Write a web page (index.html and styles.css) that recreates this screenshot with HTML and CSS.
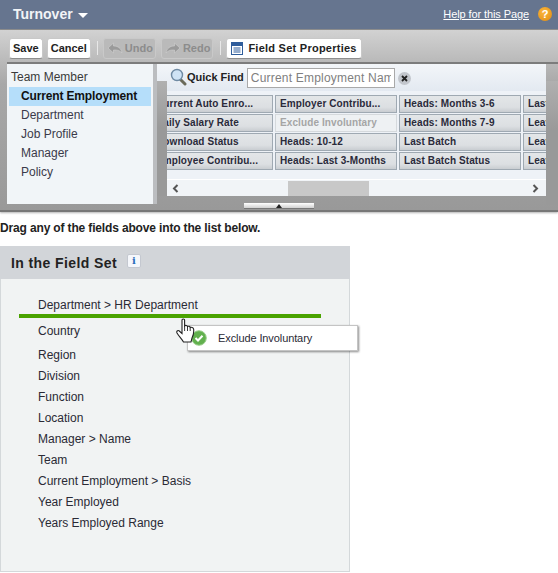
FILE: index.html
```html
<!DOCTYPE html>
<html lang="en">
<head>
  <meta charset="UTF-8">
  <title>Turnover</title>
  <link rel="stylesheet" href="styles.css">
</head>
<body>
  <div class="title-bar">
    <div class="report-name">Turnover <span class="caret"></span></div>
    <div class="help">
      <a href="#">Help for this Page</a>
      <span class="help-icon">?</span>
    </div>
  </div>

  <div class="builder">
    <div class="toolbar">
      <button class="btn text-only">Save</button>
      <button class="btn text-only">Cancel</button>
      <span class="sep"></span>
      <button class="btn disabled">
        <svg width="16" height="13" viewBox="0 0 16 13"><path d="M1 6 L6.500 1 V4 C11 4 14 6 15 11 C12 8 10 8 6.500 8 V11 Z" fill="#9a9a9a" stroke="#d0d0d0" stroke-width=".6"/></svg>
        Undo
      </button>
      <button class="btn disabled">
        <svg width="16" height="13" viewBox="0 0 16 13"><path d="M15 6 L9.500 1 V4 C5 4 2 6 1 11 C4 8 6 8 9.500 8 V11 Z" fill="#9a9a9a" stroke="#d0d0d0" stroke-width=".6"/></svg>
        Redo
      </button>
      <span class="sep"></span>
      <button class="btn props">
        <svg width="12" height="13" viewBox="0 0 12 13"><rect x=".5" y=".5" width="11" height="12" fill="#fff" stroke="#2f5d9b"/><rect x="1" y="1" width="10" height="3" fill="#2f5d9b"/><path d="M2.500 6h7M2.500 8h7M2.500 10h7" stroke="#2f5d9b"/></svg>
        Field Set Properties
      </button>
    </div>

    <div class="panes">
      <div class="categories">
        <div class="cat-root">Team Member</div>
        <div class="cat selected">Current Employment</div>
        <div class="cat">Department</div>
        <div class="cat">Job Profile</div>
        <div class="cat">Manager</div>
        <div class="cat">Policy</div>
      </div>

      <div class="fields">
        <div class="quick-find">
          <svg class="lens" width="17" height="18" viewBox="0 0 17 18"><path d="M10 11 L15 16" stroke="#6b6b5a" stroke-width="3" stroke-linecap="round"/><circle cx="7" cy="7" r="5.500" fill="#cfe3f5" stroke="#6f8aa3" stroke-width="1.400"/></svg>
          <label>Quick Find</label>
          <div class="find-input"><span>Current Employment Name</span></div>
          <span class="clear">
            <svg width="7" height="7" viewBox="0 0 7 7"><path d="M1 1 L6 6 M6 1 L1 6" stroke="#222" stroke-width="1.800"/></svg>
          </span>
        </div>

        <div class="field-scroll">
          <div class="field-grid">
            <div class="field">Current Auto Enro...</div>
            <div class="field">Employer Contribu...</div>
            <div class="field">Heads: Months 3-6</div>
            <div class="field">Last Hire</div>
            <div class="field">Daily Salary Rate</div>
            <div class="field used">Exclude Involuntary</div>
            <div class="field">Heads: Months 7-9</div>
            <div class="field">Leave Date</div>
            <div class="field">Download Status</div>
            <div class="field">Heads: 10-12</div>
            <div class="field">Last Batch</div>
            <div class="field">Leave Type</div>
            <div class="field">Employee Contribu...</div>
            <div class="field">Heads: Last 3-Months</div>
            <div class="field">Last Batch Status</div>
            <div class="field">Leave Status</div>
          </div>
        </div>

        <div class="hscroll">
          <svg width="7" height="9" viewBox="0 0 7 9"><path d="M5.500 1 L2 4.500 L5.500 8" fill="none" stroke="#555" stroke-width="2"/></svg>
          <div class="hscroll-track"><div class="hscroll-thumb"></div></div>
          <svg width="7" height="9" viewBox="0 0 7 9"><path d="M1.500 1 L5 4.500 L1.500 8" fill="none" stroke="#555" stroke-width="2"/></svg>
        </div>
      </div>
    </div>

    <div class="splitter"><span class="splitter-arrow"></span></div>
  </div>

  <p class="hint">Drag any of the fields above into the list below.</p>

  <div class="field-set">
    <div class="set-header">
      <h2>In the Field Set</h2>
      <span class="info">i</span>
    </div>
    <div class="set-body">
      <div class="item first">Department &gt; HR Department</div>
      <div class="drop-line"></div>
      <div class="item country">Country</div>
      <div class="item">Region</div>
      <div class="item">Division</div>
      <div class="item">Function</div>
      <div class="item">Location</div>
      <div class="item">Manager &gt; Name</div>
      <div class="item">Team</div>
      <div class="item">Current Employment &gt; Basis</div>
      <div class="item">Year Employed</div>
      <div class="item">Years Employed Range</div>

      <div class="drag-tip">
        <svg width="16" height="16" viewBox="0 0 16 16"><circle cx="8" cy="8" r="7.300" fill="#62b04e" stroke="#9ccf8e"/><path d="M4.500 8 L7 10.500 L11.500 5.700" fill="none" stroke="#fff" stroke-width="2"/></svg>
        Exclude Involuntary
      </div>
      <svg class="hand" width="19" height="25" viewBox="0 0 19 25"><path d="M6 2 C6 .6 8.600 .6 8.600 2 V8 C9.500 7 11.300 7.400 11.500 8.600 C12.300 7.900 14 8.200 14.200 9.400 C15.200 8.900 17.400 9.400 17.600 11 C18 14 17.500 17 16 20 L15 24 H7.500 C6 21 3 18.500 1 15 C.2 13.400 1.600 12 3 12.800 L6 15.500 Z" fill="#fff" stroke="#222" stroke-width="1.100"/><path d="M8.600 8 V13 M11.500 8.600 V13 M14.200 9.400 V13" stroke="#222" stroke-width=".9"/></svg>
    </div>
  </div>
</body>
</html>
```

FILE: styles.css
```css
* {
  box-sizing: border-box;
}

html, body {
  height: 573px;
  overflow: hidden;
}

body {
  margin: 0;
  font-family: "Liberation Sans", Arial, sans-serif;
  font-size: 12px;
  color: #222;
  background: #fff;
}

.title-bar {
  height: 30px;
  background: #66758f;
  border-bottom: 1px solid #8f8f8f;
  display: flex;
  align-items: center;
  justify-content: space-between;
  padding: 0 6px 2px 13px;
  color: #fff;
}

.report-name {
  font-size: 14px;
  font-weight: bold;
  color: #f2f4f7;
  display: flex;
  align-items: center;
  gap: 5px;
}

.caret {
  border: 4px solid transparent;
  border-top: 5px solid #fff;
  border-left-width: 5px;
  border-right-width: 5px;
  border-bottom: 0;
  margin-top: 3px;
}

.help {
  display: flex;
  align-items: center;
  gap: 9px;
  font-size: 11px;
}

.help a {
  color: #fff;
  letter-spacing: -0.1px;
}

.help-icon {
  width: 14px;
  height: 14px;
  border-radius: 50%;
  background: radial-gradient(circle at 40% 35%, #fbb73c, #e08a10);
  color: #fff;
  font-weight: bold;
  font-size: 11px;
  line-height: 14px;
  text-align: center;
}

.builder {
  height: 182px;
  background: linear-gradient(#d2d2d2, #a8a8a8 30%, #999 100%);
  border-bottom: 2px solid #777;
  box-shadow: 0 1px 2px rgba(0, 0, 0, 0.3);
  padding: 7px 0 0 7px;
}

.toolbar {
  display: flex;
  align-items: center;
  height: 22px;
  padding-left: 2px;
  margin-bottom: 3px;
}

.btn {
  height: 21px;
  padding: 0 4px;
  margin-right: 4px;
  display: flex;
  align-items: center;
  gap: 4px;
  border: 1px solid #c8c8c8;
  border-bottom-color: #8e8e8e;
  border-radius: 3px;
  background: #fff;
  font: bold 11px "Liberation Sans", Arial, sans-serif;
  color: #222;
}

.btn.text-only {
  padding: 0 3px;
}

.btn.disabled {
  padding: 0 2px 0 3px;
  background: #bababa;
  border-color: #c9c9c9;
  color: #8c8c8c;
  gap: 2px;
  margin-right: 5px;
}

.btn.props {
  gap: 5px;
  letter-spacing: 0.25px;
}

.sep {
  width: 1px;
  height: 14px;
  background: #e8e8e8;
  margin: 0 5px 0 2px;
}

.panes {
  display: flex;
  height: 141px;
  border-top: 2px solid #7c7c7c;
}

.categories {
  width: 150px;
  height: 140px;
  background: #f1f5f8;
  background-clip: padding-box;
  border-right: 4px solid #bbbdc0;
  padding: 4px 2px 0;
}

.cat-root {
  height: 19px;
  line-height: 19px;
  padding-left: 2px;
  color: #3a3a3a;
}

.cat {
  height: 19px;
  line-height: 19px;
  padding-left: 12px;
  color: #3a3a4a;
}

.cat.selected {
  background: #b5defa;
  font-weight: bold;
  letter-spacing: -0.15px;
  color: #111;
}

.fields {
  width: 389px;
  height: 132px;
  background: #f1f4f7;
  position: relative;
}

/* dark strips either side of the field grid */
.fields::before,
.fields::after {
  content: "";
  position: absolute;
  top: 17px;
  bottom: 0;
  width: 10px;
  background: linear-gradient(#b0b0b0, #999 40%);
}

.fields::before {
  left: 0;
}

.fields::after {
  right: -12px;
  width: 12px;
  bottom: -9px;
}

.quick-find {
  height: 27px;
  display: flex;
  align-items: flex-start;
  padding: 4px 0 0 13px;
  background: linear-gradient(#f3f6f9, #e3e9f1);
}

.quick-find label {
  font-weight: bold;
  font-size: 11px;
  margin: 3px 3px 0 0;
  color: #222;
}

.find-input {
  width: 148px;
  height: 20px;
  line-height: 19px;
  border: 1px solid #a9a9a9;
  background: #fff;
  padding: 0 3px;
  font-size: 12px;
  letter-spacing: 0.2px;
  color: #808080;
}

.find-input span {
  display: block;
  overflow: hidden;
  white-space: nowrap;
}

.clear {
  width: 13px;
  height: 13px;
  border-radius: 50%;
  background: #c2c6cc;
  margin: 4px 0 0 3px;
  display: flex;
  align-items: center;
  justify-content: center;
}

.field-scroll {
  margin-left: 10px;
  height: 88px;
  overflow: hidden;
  background: #eef2f7;
  padding-top: 4px;
}

.field-grid {
  display: grid;
  grid-template-columns: 122px 122px 122px 122px;
  grid-auto-rows: 18px;
  gap: 1px 2px;
  margin-left: -16px;
}

.field {
  border: 1px solid #9fa9b2;
  background: linear-gradient(#e3e6e8, #dcdfe2 70%, #c9cdd1);
  padding-left: 4px;
  font-size: 10px;
  font-weight: bold;
  letter-spacing: 0.1px;
  line-height: 16px;
  white-space: nowrap;
  overflow: hidden;
  color: #2a2a3a;
}

.field.used {
  background: #eef1f3;
  border-color: #d5d9dc;
  color: #a5a5a5;
}

.hscroll {
  margin-left: 10px;
  height: 17px;
  border-top: 1px solid #fff;
  background: #f1f4f7;
  display: flex;
  align-items: center;
  padding: 0 7px 0 5px;
}

.hscroll-track {
  flex: 1;
  height: 15px;
  padding-left: 109px;
}

.hscroll-thumb {
  width: 81px;
  height: 15px;
  background: #c8c8c8;
}

.splitter {
  width: 70px;
  height: 6px;
  margin: 0 0 0 237px;
  background: linear-gradient(#fff, #d0d0d0);
  border-bottom: 1px solid #777;
  display: flex;
  justify-content: center;
}

.splitter-arrow {
  border: 3px solid transparent;
  border-top: 0;
  border-bottom: 4px solid #222;
  margin-top: 1px;
}

.hint {
  margin: 9px 0 0;
  height: 25px;
  font-size: 12px;
  font-weight: bold;
  line-height: 14px;
  letter-spacing: -0.15px;
  color: #222;
}

.field-set {
  width: 350px;
  height: 326px;
  border: 1px solid #d4d8da;
  border-top: 0;
  background: #f1f3f3;
}

.set-header {
  height: 33px;
  margin: 0 -1px;
  background: #d2d5d9;
  display: flex;
  align-items: center;
  padding-left: 11px;
  gap: 10px;
}

.set-header h2 {
  margin: 0;
  font-size: 14px;
  letter-spacing: 0.4px;
  color: #222;
}

.info {
  width: 14px;
  height: 14px;
  background: #f5f7fb;
  border: 1px solid #c4c8d0;
  border-radius: 2px;
  font: bold 10px/12px "DejaVu Serif", serif;
  color: #2a6fbb;
  text-align: center;
  margin-top: -4px;
}

.set-body {
  position: relative;
  padding-top: 17px;
}

.item {
  height: 21px;
  line-height: 21px;
  padding-left: 37px;
  color: #2a2a35;
}

.item.first {
  height: 18px;
  line-height: 18px;
}

.item.country {
  margin: 3px 0;
}

.drop-line {
  width: 302px;
  height: 4px;
  margin-left: 18px;
  background: #4aa300;
}

.drag-tip {
  position: absolute;
  top: 46px;
  left: 186px;
  width: 171px;
  height: 26px;
  display: flex;
  align-items: center;
  gap: 11px;
  padding-left: 3px;
  background: #fff;
  border: 1px solid #c4c4c4;
  box-shadow: 1px 1px 2px rgba(0, 0, 0, 0.45);
  font-size: 11px;
  letter-spacing: -0.1px;
  color: #2a2a35;
}

.hand {
  position: absolute;
  top: 39px;
  left: 175px;
}
```
